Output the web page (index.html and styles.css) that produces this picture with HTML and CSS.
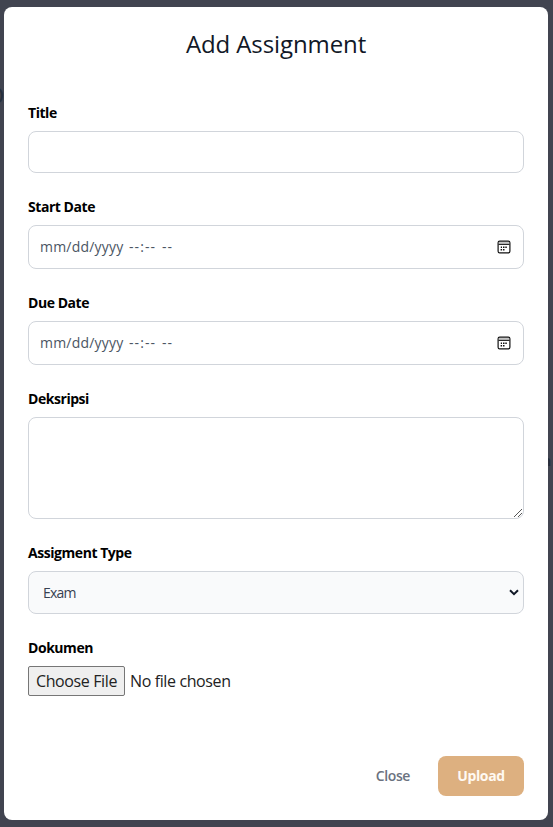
FILE: index.html
```html
<!DOCTYPE html>
<html lang="en">
<head>
<meta charset="utf-8">
<title>Add Assignment</title>
<link rel="stylesheet" href="styles.css">
</head>
<body>
<span class="behind behind-left">D</span>
<span class="behind behind-right">n</span>
<main class="modal">
  <h1>Add Assignment</h1>
  <form>
    <div class="group">
      <label>Title</label>
      <div class="control text"></div>
    </div>
    <div class="group">
      <label>Start Date</label>
      <div class="control date">
        <span class="day">mm/dd/yyyy</span><span class="time">--:--</span><span class="period">--</span>
        <svg class="calendar" width="14" height="14" viewBox="0 0 14 14"><rect x="1.1" y="1.1" width="11.8" height="11.8" rx="1.6" fill="none" stroke="#111" stroke-width="1.2"/><path d="M1.5 3h11" stroke="#888"/><path d="M1.5 4.4h11" stroke="#111"/><path d="M6 7.3h1.5M8.3 7.3h1.5M3.8 7.3h1.2M3.6 9.8h1.5M6 9.8h1.5" stroke="#111" stroke-width="1.4"/></svg>
      </div>
    </div>
    <div class="group">
      <label>Due Date</label>
      <div class="control date">
        <span class="day">mm/dd/yyyy</span><span class="time">--:--</span><span class="period">--</span>
        <svg class="calendar" width="14" height="14" viewBox="0 0 14 14"><rect x="1.1" y="1.1" width="11.8" height="11.8" rx="1.6" fill="none" stroke="#111" stroke-width="1.2"/><path d="M1.5 3h11" stroke="#888"/><path d="M1.5 4.4h11" stroke="#111"/><path d="M6 7.3h1.5M8.3 7.3h1.5M3.8 7.3h1.2M3.6 9.8h1.5M6 9.8h1.5" stroke="#111" stroke-width="1.4"/></svg>
      </div>
    </div>
    <div class="group">
      <label>Deksripsi</label>
      <div class="control area">
        <svg width="10" height="10" viewBox="0 0 10 10"><path d="M1 9L9 1M5 9l4-4" stroke="#444" stroke-width=".9"/></svg>
      </div>
    </div>
    <div class="group">
      <label>Assigment Type</label>
      <div class="control select">
        <span class="exam">Exam</span>
        <svg width="10" height="7" viewBox="0 0 10 7"><path d="M1 1.2l4 3.9 4-3.9" fill="none" stroke="#111827" stroke-width="2"/></svg>
      </div>
    </div>
    <div class="group">
      <label>Dokumen</label>
      <div class="picker"><button type="button">Choose File</button><span>No file chosen</span></div>
    </div>
  </form>
  <footer><span class="close">Close</span><button type="button" class="upload">Upload</button></footer>
</main>
</body>
</html>
```
FILE: styles.css
```css
* { box-sizing: border-box; }
body {
  margin: 0;
  height: 827px;
  padding: 7px 5px 7px 4px;
  overflow: hidden;
  background: #414450;
  font-family: "Open Sans", "Noto Sans", sans-serif;
  font-size: 14px;
  line-height: 20px;
  color: #111827;
}
.behind { position: absolute; color: #262f3c; white-space: nowrap; }
.behind-left { left: -13px; top: 83px; font-size: 24px; line-height: 24px; }
.behind-right { left: 542px; top: 451px; font-weight: 700; }
.modal {
  position: relative;
  height: 813px;
  padding: 24px;
  border-radius: 8px;
  background: #fff;
  display: flex;
  flex-direction: column;
}
h1 {
  margin: 0;
  height: 72px;
  font-size: 24px;
  font-weight: 500;
  line-height: 26px;
  text-align: center;
  letter-spacing: -.1px;
}
form { display: flex; flex-direction: column; gap: 24px; }
.group { display: flex; flex-direction: column; align-items: flex-start; gap: 8px; }
label { height: 20px; font-weight: 700; color: #000; white-space: nowrap; letter-spacing: -.45px; }
.control {
  width: 496px;
  border: 1px solid #d1d5db;
  border-radius: 8px;
  display: flex;
  align-items: center;
}
.text { height: 42px; }
.date { height: 44px; padding: 0 12px 0 11px; color: #4b5563; }
.date span { white-space: nowrap; letter-spacing: 1.1px; }
.date .day { width: 89px; letter-spacing: .2px; }
.time { width: 33px; }
.calendar { margin-left: auto; }
.area { height: 102px; align-items: flex-end; justify-content: flex-end; }
.area svg { display: block; }
.select { height: 43px; padding: 0 4px 0 14px; justify-content: space-between; background: #f9fafb; color: #374151; }
.exam { letter-spacing: -.8px; }
.picker { display: flex; height: 30px; align-items: center; gap: 5px; font-size: 16px; color: #222; white-space: nowrap; letter-spacing: -.38px; }
.picker button {
  width: 97px;
  height: 30px;
  padding: 0;
  border: 1px solid #767676;
  border-radius: 2px;
  background: #efefef;
  font: inherit;
  letter-spacing: inherit;
  color: #222;
}
footer { margin-top: auto; display: flex; justify-content: flex-end; align-items: center; gap: 28px; }
.close { color: #6b7280; font-weight: 600; letter-spacing: -.4px; }
.upload {
  width: 86px;
  height: 40px;
  padding: 0;
  border: 0;
  border-radius: 8px;
  background: #ddb080;
  color: #fff9f2;
  font: inherit;
  font-weight: 700;
  letter-spacing: -.4px;
}
```
